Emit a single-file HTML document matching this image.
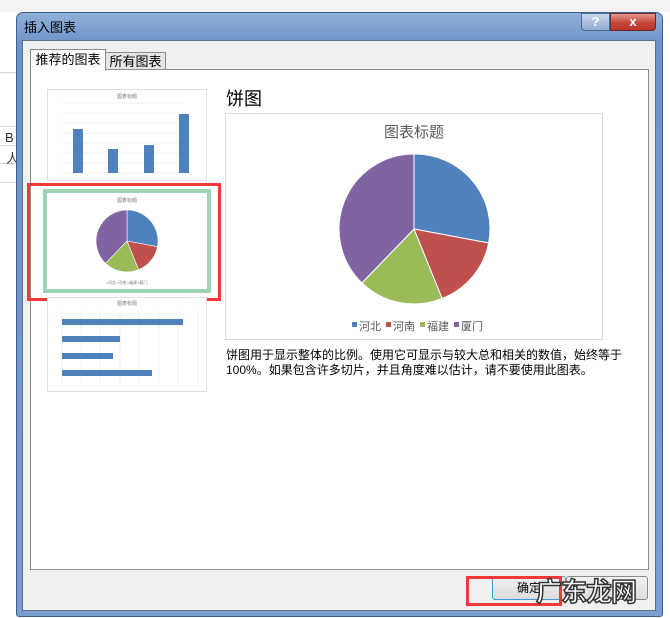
<!DOCTYPE html>
<html><head><meta charset="utf-8"><style>
*{margin:0;padding:0;box-sizing:border-box}
body{width:670px;height:618px;overflow:hidden;background:#fff;position:relative;font-family:"Liberation Sans","Noto Sans CJK SC",sans-serif}
.a{position:absolute}
</style></head><body>
<!-- background spreadsheet bits -->
<div class="a" style="left:0;top:0;width:670px;height:12px;background:#f3f3f3"></div>
<div class="a" style="left:0;top:72px;width:16px;height:1px;background:#d4d4d4"></div>
<div class="a" style="left:0;top:126px;width:16px;height:1px;background:#d4d4d4"></div>
<div class="a" style="left:0;top:145px;width:16px;height:1px;background:#d4d4d4"></div>
<div class="a" style="left:0;top:163px;width:16px;height:1px;background:#d4d4d4"></div>
<div class="a" style="left:0;top:182px;width:16px;height:1px;background:#d4d4d4"></div>
<div class="a" style="left:5px;top:130px;font-size:13px;color:#333">B</div>
<div class="a" style="left:6px;top:148px;font-size:13px;color:#333">人</div>
<!-- dialog -->
<div class="a" style="left:16px;top:12px;width:647px;height:605px;border-radius:7px 7px 3px 3px;background:linear-gradient(#8fb0d9,#6d93c8 30px,#7b9ed0);border:1px solid #3d5f8e"></div>
<div class="a" style="left:24px;top:17px;font-size:13px;color:#000">插入图表</div>
<div class="a" style="left:581px;top:13px;width:29px;height:18px;background:linear-gradient(#c9d8ec,#91abd0);border:1px solid #4d6a94;border-radius:0 0 0 4px;color:#fff;font-weight:bold;font-size:13px;text-align:center;line-height:16px">?</div>
<div class="a" style="left:610px;top:13px;width:46px;height:18px;background:linear-gradient(#e59a8e,#c5463a 55%,#b8362c);border:1px solid #6a2a25;border-radius:0 0 4px 0;color:#fff;font-weight:bold;font-size:13px;text-align:center;line-height:16px">x</div>
<div class="a" style="left:22px;top:40px;width:634px;height:571px;background:#f0f0f0;border:1px solid #5a6f8c"></div>
<!-- tabs -->
<div class="a" style="left:105px;top:52px;width:61px;height:19px;background:#e6e6e6;border:1px solid #8c8c8c;font-size:13px;line-height:17px;text-align:center">所有图表</div>
<div class="a" style="left:30px;top:69px;width:619px;height:501px;background:#fff;border:1px solid #8c8c8c"></div>
<div class="a" style="left:30px;top:49px;width:76px;height:22px;background:#fff;border:1px solid #8c8c8c;border-bottom:none;font-size:13px;line-height:20px;text-align:center">推荐的图表</div>
<!-- thumb 1 bar -->
<div class="a" style="left:47px;top:89px;width:160px;height:92px;border:1px solid #e0e0e0;background:#fff"></div>
<svg class="a" style="left:47px;top:89px" width="160" height="92">
<text x="80" y="9" font-size="5" fill="#777" text-anchor="middle">图表标题</text>
<g stroke="#e4e4e4" stroke-width="0.6"><line x1="15" x2="136" y1="14" y2="14"/><line x1="15" x2="136" y1="24" y2="24"/><line x1="15" x2="136" y1="34" y2="34"/><line x1="15" x2="136" y1="44" y2="44"/><line x1="15" x2="136" y1="54" y2="54"/><line x1="15" x2="136" y1="64" y2="64"/><line x1="15" x2="136" y1="74" y2="74"/><line x1="15" x2="136" y1="84" y2="84"/></g>
<g fill="#4f81bd"><rect x="26" y="40" width="10" height="44"/><rect x="61" y="60" width="10" height="24"/><rect x="97" y="56" width="10" height="28"/><rect x="132" y="25" width="10" height="59"/></g>
</svg>
<!-- highlight -->
<div class="a" style="left:27px;top:183px;width:194px;height:118px;border:3px solid #f03a3a"></div>
<div class="a" style="left:43px;top:189px;width:168px;height:104px;border:4px solid #9dd3b4;background:#fff"></div>
<svg class="a" style="left:47px;top:193px" width="160" height="96">
<text x="80" y="9" font-size="5" fill="#777" text-anchor="middle">图表标题</text>
<g stroke="#fff" stroke-width="0.6">
<path d="M80,36 L80,5 A31,31 0 0 1 110.5,41.7 Z" fill="#4f81bd" transform="translate(0,12)"/>
<path d="M80,36 L110.5,41.7 A31,31 0 0 1 91.6,64.7 Z" fill="#c0504d" transform="translate(0,12)"/>
<path d="M80,36 L91.6,64.7 A31,31 0 0 1 58.5,58.3 Z" fill="#9bbb59" transform="translate(0,12)"/>
<path d="M80,36 L58.5,58.3 A31,31 0 0 1 80,5 Z" fill="#8064a2" transform="translate(0,12)"/>
</g>
<text x="80" y="91" font-size="4" fill="#777" text-anchor="middle">▪河北 ▪河南 ▪福建 ▪厦门</text>
</svg>
<!-- thumb 3 hbar -->
<div class="a" style="left:47px;top:297px;width:160px;height:95px;border:1px solid #e0e0e0;background:#fff"></div>
<svg class="a" style="left:47px;top:297px" width="160" height="95">
<text x="80" y="8" font-size="5" fill="#777" text-anchor="middle">图表标题</text>
<g stroke="#e4e4e4" stroke-width="0.6"><line x1="15" x2="15" y1="14" y2="86"/><line x1="34" x2="34" y1="14" y2="86"/><line x1="53" x2="53" y1="14" y2="86"/><line x1="73" x2="73" y1="14" y2="86"/><line x1="92" x2="92" y1="14" y2="86"/><line x1="112" x2="112" y1="14" y2="86"/><line x1="131" x2="131" y1="14" y2="86"/><line x1="151" x2="151" y1="14" y2="86"/></g>
<g fill="#4f81bd"><rect x="15" y="22" width="121" height="6"/><rect x="15" y="39" width="58" height="6"/><rect x="15" y="56" width="51" height="6"/><rect x="15" y="73" width="90" height="6"/></g>
</svg>
<!-- right side -->
<div class="a" style="left:226px;top:85px;font-size:18px;color:#000">饼图</div>
<div class="a" style="left:225px;top:113px;width:378px;height:227px;border:1px solid #d9d9d9"></div>
<div class="a" style="left:225px;top:121px;width:378px;text-align:center;font-size:15px;color:#595959">图表标题</div>
<svg class="a" style="left:0;top:0" width="670" height="618">
<g stroke="#fff" stroke-width="1">
<path d="M414,229 L414,154 A75,75 0 0 1 488.7,243 Z" fill="#4f81bd"/>
<path d="M414,229 L488.7,243 A75,75 0 0 1 442.1,298.5 Z" fill="#c0504d"/>
<path d="M414,229 L442.1,298.5 A75,75 0 0 1 361.9,282.9 Z" fill="#9bbb59"/>
<path d="M414,229 L361.9,282.9 A75,75 0 0 1 414,154 Z" fill="#8064a2"/>
</g>
<rect x="352" y="322" width="5" height="5" fill="#4f81bd"/>
<rect x="386" y="322" width="5" height="5" fill="#c0504d"/>
<rect x="420" y="322" width="5" height="5" fill="#9bbb59"/>
<rect x="454" y="322" width="5" height="5" fill="#8064a2"/>
</svg>
<div class="a" style="left:359px;top:318px;font-size:11px;color:#595959">河北</div>
<div class="a" style="left:393px;top:318px;font-size:11px;color:#595959">河南</div>
<div class="a" style="left:427px;top:318px;font-size:11px;color:#595959">福建</div>
<div class="a" style="left:461px;top:318px;font-size:11px;color:#595959">厦门</div>
<div class="a" style="left:226px;top:348px;width:400px;font-size:12px;line-height:15px;color:#000">饼图用于显示整体的比例。使用它可显示与较大总和相关的数值，始终等于100%。如果包含许多切片，并且角度难以估计，请不要使用此图表。</div>
<!-- buttons -->
<div class="a" style="left:492px;top:576px;width:74px;height:24px;border:1px solid #3c9ad6;border-radius:3px;background:linear-gradient(#f2f2f2,#dcdcdc);font-size:12px;text-align:center;line-height:22px">确定</div>
<div class="a" style="left:566px;top:576px;width:82px;height:24px;border:1px solid #8c8c8c;border-radius:3px;background:linear-gradient(#f2f2f2,#dcdcdc)"></div>
<div class="a" style="left:466px;top:576px;width:96px;height:30px;border:3px solid #f03a3a"></div>
<div class="a" style="left:536px;top:572px;font-size:26px;font-weight:bold;color:#fff;-webkit-text-stroke:1.5px #333;letter-spacing:-1px">广东龙网</div>
</body></html>
